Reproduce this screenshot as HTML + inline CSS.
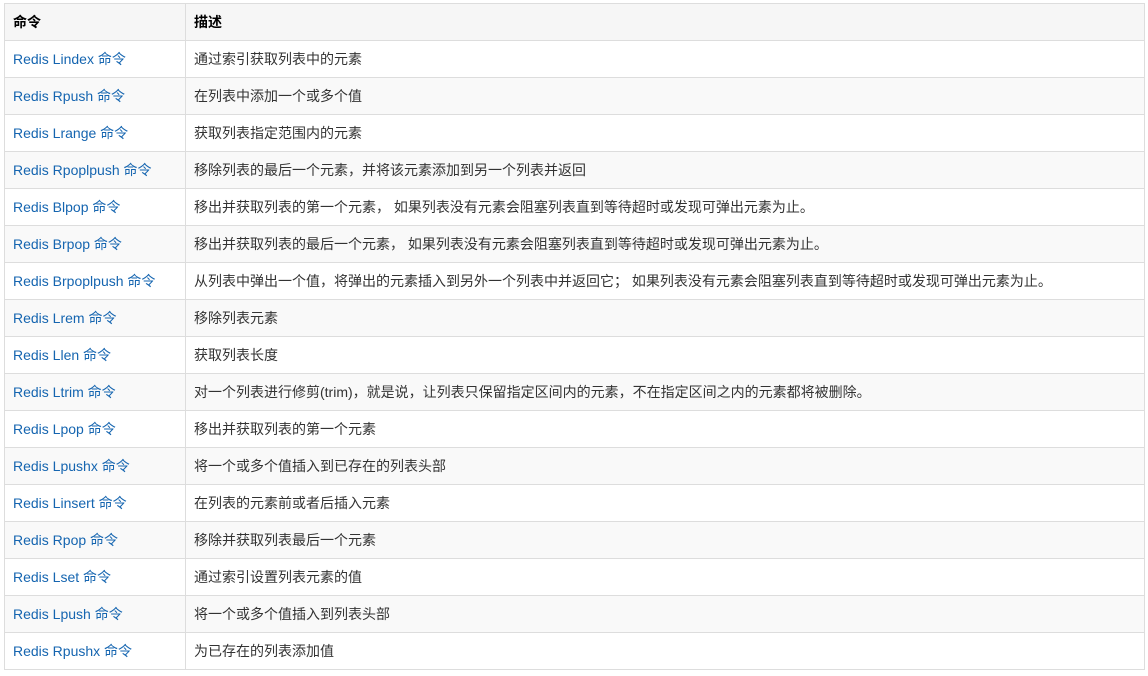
<!DOCTYPE html>
<html><head><meta charset="utf-8"><style>
body{margin:0;background:#fff;font-family:"Liberation Sans","Microsoft YaHei","Noto Sans CJK SC",sans-serif;font-size:14px;color:#333}
table{position:absolute;left:4px;top:3px;width:1141px;border-collapse:collapse;table-layout:fixed}
td,th{border:1px solid #ddd;height:37px;padding:0 0 0 8px;text-align:left;white-space:nowrap;box-sizing:border-box}
th{background:#f6f6f6;font-weight:bold;color:#000}
tr:nth-child(odd) td{background:#f9f9f9}
a{color:#1565b0;text-decoration:none}
</style></head><body>
<table>
<colgroup><col style="width:181px"><col></colgroup>
<tr><th>命令</th><th>描述</th></tr>
<tr><td><a>Redis Lindex 命令</a></td><td>通过索引获取列表中的元素</td></tr>
<tr><td><a>Redis Rpush 命令</a></td><td>在列表中添加一个或多个值</td></tr>
<tr><td><a>Redis Lrange 命令</a></td><td>获取列表指定范围内的元素</td></tr>
<tr><td><a>Redis Rpoplpush 命令</a></td><td>移除列表的最后一个元素，并将该元素添加到另一个列表并返回</td></tr>
<tr><td><a>Redis Blpop 命令</a></td><td>移出并获取列表的第一个元素， 如果列表没有元素会阻塞列表直到等待超时或发现可弹出元素为止。</td></tr>
<tr><td><a>Redis Brpop 命令</a></td><td>移出并获取列表的最后一个元素， 如果列表没有元素会阻塞列表直到等待超时或发现可弹出元素为止。</td></tr>
<tr><td><a>Redis Brpoplpush 命令</a></td><td>从列表中弹出一个值，将弹出的元素插入到另外一个列表中并返回它； 如果列表没有元素会阻塞列表直到等待超时或发现可弹出元素为止。</td></tr>
<tr><td><a>Redis Lrem 命令</a></td><td>移除列表元素</td></tr>
<tr><td><a>Redis Llen 命令</a></td><td>获取列表长度</td></tr>
<tr><td><a>Redis Ltrim 命令</a></td><td>对一个列表进行修剪(trim)，就是说，让列表只保留指定区间内的元素，不在指定区间之内的元素都将被删除。</td></tr>
<tr><td><a>Redis Lpop 命令</a></td><td>移出并获取列表的第一个元素</td></tr>
<tr><td><a>Redis Lpushx 命令</a></td><td>将一个或多个值插入到已存在的列表头部</td></tr>
<tr><td><a>Redis Linsert 命令</a></td><td>在列表的元素前或者后插入元素</td></tr>
<tr><td><a>Redis Rpop 命令</a></td><td>移除并获取列表最后一个元素</td></tr>
<tr><td><a>Redis Lset 命令</a></td><td>通过索引设置列表元素的值</td></tr>
<tr><td><a>Redis Lpush 命令</a></td><td>将一个或多个值插入到列表头部</td></tr>
<tr><td><a>Redis Rpushx 命令</a></td><td>为已存在的列表添加值</td></tr>
</table>
</body></html>
